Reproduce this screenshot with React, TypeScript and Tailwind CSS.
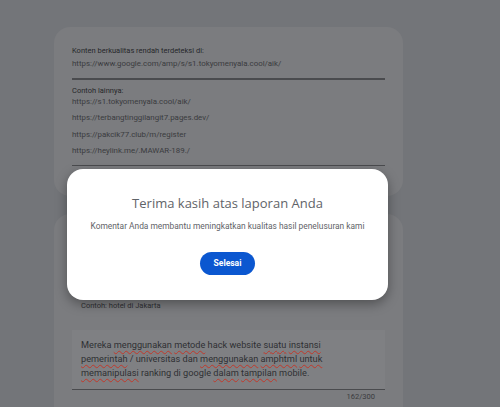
import React from "react";

const MORE_EXAMPLES = [
  "https://s1.tokyomenyala.cool/aik/",
  "https://terbangtinggilangit7.pages.dev/",
  "https://pakcik77.club/m/register",
  "https://heylink.me/.MAWAR-189./",
];

function Squiggle({ children }: { children: React.ReactNode }) {
  return (
    <span className="underline decoration-wavy decoration-[#c0392b] decoration-[1px] underline-offset-[2px]">
      {children}
    </span>
  );
}

export default function App() {
  return (
    <div
      className="relative h-[407px] w-[500px] overflow-hidden bg-[#737579]"
      style={{ fontFamily: "Roboto, 'Liberation Sans', sans-serif" }}
    >
      <div className="ml-[54px] w-[349px] pt-[27px] flex flex-col gap-[18px]">
        {/* report details card */}
        <div className="rounded-[16px] bg-[#7b7c7f] px-[18px] pt-[18px] pb-[30px]">
          <p className="text-[7.5px] leading-[11px] text-[#26272a]">Konten berkualitas rendah terdeteksi di:</p>
          <p className="mt-[1px] text-[7.9px] leading-[13px] text-[#3a3b3e]">
            https://www.google.com/amp/s/s1.tokyomenyala.cool/aik/
          </p>
          <div className="mt-[8px] h-[1.5px] bg-[#4a4b4e]" />
          <p className="mt-[5px] text-[7.5px] leading-[11px] text-[#26272a]">Contoh lainnya:</p>
          <div className="-mt-[2px] flex flex-col">
            {MORE_EXAMPLES.map((url) => (
              <p key={url} className="text-[7.9px] leading-[16.5px] text-[#3a3b3e]">
                {url}
              </p>
            ))}
          </div>
          <div className="mt-[5px] h-[1.5px] bg-[#4a4b4e]" />
        </div>

        {/* comment card */}
        <div className="h-[220px] rounded-[16px] bg-[#7b7c7f] px-[18px] pt-[86px]">
          <p className="pl-[9px] text-[7.5px] leading-[12px] text-[#2e2f32]">Contoh: hotel di Jakarta</p>
          <div className="mt-[18px] h-[60px] bg-[#7f8083] border-b-[1.5px] border-[#4a4b4e] pl-[9px] pt-[8px]">
            <p className="text-[9.2px] leading-[14px] text-[#2f3033] whitespace-nowrap">
              Mereka <Squiggle>menggunakan</Squiggle> <Squiggle>metode</Squiggle> hack website{" "}
              <Squiggle>suatu</Squiggle> <Squiggle>instansi</Squiggle>
              <br />
              <Squiggle>pemerintah</Squiggle> / universitas dan <Squiggle>menggunakan</Squiggle>{" "}
              <Squiggle>amphtml</Squiggle> <Squiggle>untuk</Squiggle>
              <br />
              <Squiggle>memanipulasi</Squiggle> ranking di google <Squiggle>dalam</Squiggle>{" "}
              <Squiggle>tampilan</Squiggle> mobile.
            </p>
          </div>
          <p className="mt-[1px] pr-[10px] text-right text-[7.5px] leading-[12px] text-[#3a3b3e]">162/300</p>
        </div>
      </div>

      {/* thank-you dialog */}
      <div className="absolute left-[67px] top-[169px] flex h-[131px] w-[321px] flex-col items-center rounded-[16px] bg-white shadow-[0_4px_12px_rgba(0,0,0,0.35)]">
        <h2 className="mt-[24px] text-[13px] leading-[20px] text-[#5f6368]" style={{ fontFamily: "'Open Sans', Roboto, sans-serif" }}>
          Terima kasih atas laporan Anda
        </h2>
        <p className="mt-[7px] text-[8.4px] leading-[12px] text-[#5f6368]">
          Komentar Anda membantu meningkatkan kualitas hasil penelusuran kami
        </p>
        <button className="mt-[20px] h-[23px] w-[55px] rounded-full bg-[#0b57d0] text-[8.5px] font-bold text-white">
          Selesai
        </button>
      </div>
    </div>
  );
}
